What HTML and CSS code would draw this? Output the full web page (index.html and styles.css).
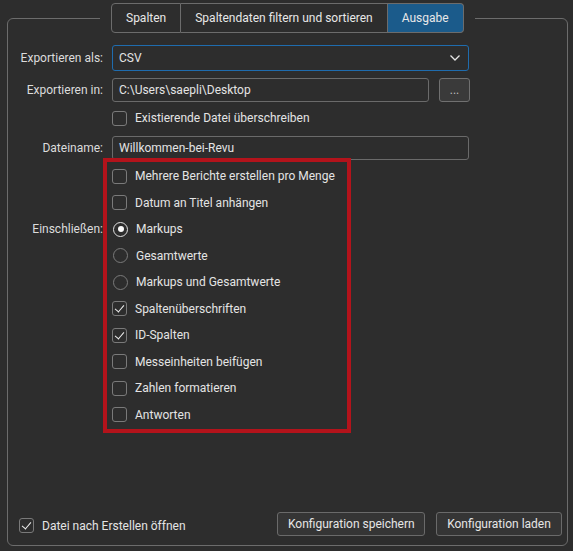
FILE: index.html
```html
<!DOCTYPE html>
<html>
<head>
	<title>Exportieren</title>
	<meta charset="utf-8">
	<link rel="stylesheet" href="styles.css">
</head>
<body>
<fieldset class="export-panel">
	<legend class="tabs">
		<span class="tab">Spalten</span>
		<span class="tab">Spaltendaten filtern und sortieren</span>
		<span class="tab active">Ausgabe</span>
	</legend>

	<div class="panel">
		<div class="form">
			<div class="row row-format">
				<span class="field-label">Exportieren als:</span>
				<div class="select">
					<span>CSV</span>
					<svg class="chevron" width="10" height="6" viewBox="0 0 10 6"><polyline points="0.5,0.5 5,5 9.5,0.5" fill="none" stroke="#e6e6e6" stroke-width="1.3"/></svg>
				</div>
			</div>

			<div class="row row-path">
				<span class="field-label">Exportieren in:</span>
				<div class="path-group">
					<div class="input path-input">C:\Users\saepli\Desktop</div>
					<button class="btn browse">...</button>
				</div>
			</div>

			<div class="row row-overwrite">
				<span class="field-label"></span>
				<label class="option"><span class="box"></span>Existierende Datei überschreiben</label>
			</div>

			<div class="row row-name">
				<span class="field-label">Dateiname:</span>
				<div class="input name-input">Willkommen-bei-Revu</div>
			</div>

			<div class="row row-include">
				<span class="field-label include-label">Einschließen:</span>
				<div class="options">
					<label class="option"><span class="box"></span>Mehrere Berichte erstellen pro Menge</label>
					<label class="option"><span class="box"></span>Datum an Titel anhängen</label>
					<label class="option"><span class="radio checked"></span>Markups</label>
					<label class="option"><span class="radio"></span>Gesamtwerte</label>
					<label class="option"><span class="radio"></span>Markups und Gesamtwerte</label>
					<label class="option"><span class="box checked"></span>Spaltenüberschriften</label>
					<label class="option"><span class="box checked"></span>ID-Spalten</label>
					<label class="option"><span class="box"></span>Messeinheiten beifügen</label>
					<label class="option"><span class="box"></span>Zahlen formatieren</label>
					<label class="option"><span class="box"></span>Antworten</label>
				</div>
			</div>
		</div>

		<div class="footer">
			<label class="option open-after"><span class="box checked"></span>Datei nach Erstellen öffnen</label>
			<button class="btn save">Konfiguration speichern</button>
			<button class="btn load">Konfiguration laden</button>
		</div>
	</div>
</fieldset>
</body>
</html>
```

FILE: styles.css
```css
html, body{
	background-color: #2d2d2d;
}
body{
	margin: 0;
	padding: 3px 5px 0 7px;
	font: 12px/16px Roboto, "Noto Sans", sans-serif;
	color: #e4e4e4;
}

/* rahmen mit den reitern oben auf der linie */
.export-panel{
	box-sizing: border-box;
	height: 543px;
	margin: 0;
	padding: 0;
	border: 1px solid #6c6c6c;
	border-radius: 6px;
}
.tabs{
	display: flex;
	margin-left: 92px;
	padding: 0 11px;
}
.tab{
	display: block;
	height: 28px;
	line-height: 28px;
	padding: 0 14px;
	border: 1px solid #6c6c6c;
	border-left-width: 0;
	color: #e8e8e8;
}
.tab:first-child{
	border-left-width: 1px;
	border-radius: 4px 0 0 4px;
}
.tab:last-child{
	border-radius: 0 4px 4px 0;
}
.tab.active{
	background-color: #1b5b8b;
}

.panel{
	box-sizing: border-box;
	height: 512px;
	display: flex;
	flex-direction: column;
	padding: 12px 0 9px;
}

.form{
	flex: 1;
}
.row{
	display: flex;
	column-gap: 9px;
	align-items: center;
}
.field-label{
	width: 95px;
	flex: none;
	text-align: right;
	color: #dcdcdc;
}
.row-format{
	height: 26px;
	margin-bottom: 7px;
}
.row-path{
	height: 24px;
	margin-bottom: 8px;
}
.row-overwrite{
	height: 16px;
	margin-bottom: 10px;
}
.row-name{
	height: 24px;
	margin-bottom: -2px;
}
.row-include{
	align-items: flex-start;
}
.include-label{
	padding-top: 63px;
}

.select, .input{
	box-sizing: border-box;
	display: flex;
	align-items: center;
	height: 100%;
	padding: 0 6px;
	border: 1px solid #6a6a6a;
	border-radius: 3px;
}
.select{
	width: 357px;
	justify-content: space-between;
	border-color: #1f6cae;
	padding-right: 8px;
}
.path-group{
	display: flex;
	gap: 10px;
	height: 100%;
}
.path-input{
	width: 317px;
}
.name-input{
	width: 357px;
}

.btn{
	box-sizing: border-box;
	height: 24px;
	margin: 0;
	padding: 0 10px;
	font: inherit;
	white-space: nowrap;
	color: #e6e6e6;
	background-color: #353535;
	border: 1px solid #6a6a6a;
	border-radius: 3px;
}
.browse{
	width: 31px;
	padding: 0;
	color: #bdbdbd;
	background-color: #3a3a3a;
	border-color: #707070;
}

/* checkboxen und radios */
.option{
	display: flex;
	align-items: center;
	gap: 8px;
	white-space: nowrap;
}
.box, .radio{
	box-sizing: border-box;
	flex: none;
	width: 15px;
	height: 15px;
	border: 1px solid #7a7a7a;
	position: relative;
}
.box{
	border-radius: 3px;
}
.box.checked::after{
	content: "";
	position: absolute;
	left: 4px;
	top: 1px;
	width: 4px;
	height: 8px;
	border: solid #f0f0f0;
	border-width: 0 1.3px 1.3px 0;
	transform: rotate(40deg);
}
.radio{
	border-radius: 50%;
	margin-left: 1px;
}
.radio.checked{
	border-color: #e0e0e0;
}
.radio.checked::after{
	content: "";
	position: absolute;
	left: 3.5px;
	top: 3.5px;
	width: 6px;
	height: 6px;
	border-radius: 50%;
	background-color: #fafafa;
}

.options{
	box-sizing: border-box;
	width: 248px;
	margin-left: -9px;
	padding: 1px 0 1px 5px;
	border: 4px solid #b3131b;
}
.options .option{
	height: 26.5px;
}

.footer{
	display: flex;
	align-items: center;
	padding: 0 5px 0 11px;
}
.open-after{
	margin-top: 3px;
}
.save{
	margin-left: auto;
	width: 148px;
}
.load{
	margin-left: 11px;
	width: 126px;
}
```
